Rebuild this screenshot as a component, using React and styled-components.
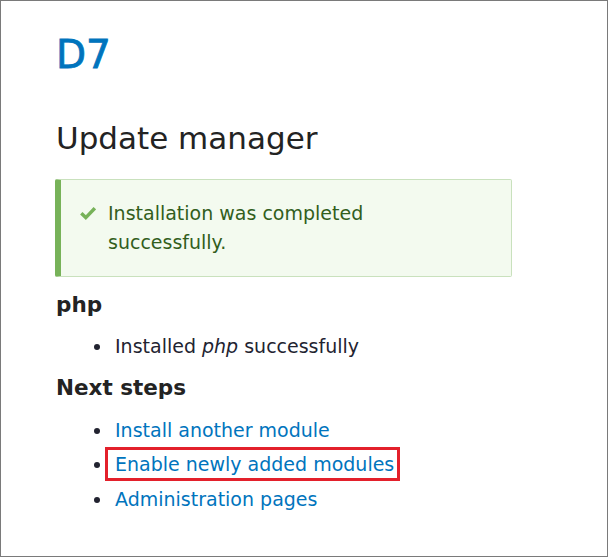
import * as React from "react";
import styled, { createGlobalStyle } from "styled-components";

const Global = createGlobalStyle`
html, body {
  margin: 0;
  padding: 0;
  background: #fff;
}
body {
  font-family: "DejaVu Sans", "Liberation Sans", sans-serif;
  color: #222330;
}`

const Frame = styled.div`
box-sizing: border-box;
width: 608px;
height: 557px;
border: 1px solid #7a7a7a;
padding: 31px 55px 0 55px;
overflow: hidden;`

const SiteName = styled.h1`
margin: 0;
font-size: 39px;
font-weight: normal;
-webkit-text-stroke: 0.8px #0074bd;
line-height: 46px;
color: #0074bd;`

const PageTitle = styled.h2`
margin: 40px 0 0 0;
font-size: 31px;
font-weight: normal;
line-height: 40px;
color: #232323;`

const Message = styled.div`
margin: 21px 0 0 -1px;
width: 457px;
box-sizing: border-box;
display: flex;
align-items: flex-start;
gap: 12px;
padding: 19px 40px 19px 19px;
background: #f3faef;
border: 1px solid #c9e1bd;
border-left: 6px solid #77b259;
border-radius: 2px;
color: #325e1c;
font-size: 19px;
line-height: 29px;`

const Check = styled.svg`
flex: none;
width: 16px;
height: 14px;
margin-top: 7px;`

const Section = styled.h3`
margin: ${({ $top }) => $top}px 0 0 0;
font-size: 21.5px;
font-weight: bold;
line-height: 26px;
color: #232323;`

const List = styled.ul`
margin: ${({ $top }) => $top}px 0 0 0;
padding: 0 0 0 59px;
list-style: none;`

const Item = styled.li`
position: relative;
font-size: 19px;
line-height: 34.5px;
color: #222330;
&::before {
  content: "";
  position: absolute;
  left: -21px;
  top: 15px;
  width: 6px;
  height: 6px;
  border-radius: 50%;
  background: #222330;
}`

const Link = styled.a`
color: #0074bd;
text-decoration: none;
display: inline-block;
line-height: 28px;
outline: ${({ $marked }) => ($marked ? "3px solid #e3202b" : "none")};
outline-offset: 0px;
padding: ${({ $marked }) => ($marked ? "0 3px 0 7px" : "0")};
margin-left: ${({ $marked }) => ($marked ? "-7px" : "0")};`

const links = [
  { label: "Install another module" },
  { label: "Enable newly added modules", marked: true },
  { label: "Administration pages" },
];

export default function App() {
  return (
    <>
      <Global />
      <Frame>
        <SiteName>D7</SiteName>
        <PageTitle>Update manager</PageTitle>
        <Message>
          <Check viewBox="0 0 16 14">
            <path d="M1.3 7.3 L5.8 11.6 L14.8 2.2" fill="none" stroke="#77b259" strokeWidth="3.4" />
          </Check>
          <div>Installation was completed successfully.</div>
        </Message>
        <Section $top={15}>php</Section>
        <List $top={11}>
          <Item>Installed <em>php</em> successfully</Item>
        </List>
        <Section $top={11}>Next steps</Section>
        <List $top={12}>
          {links.map((l) => (
            <Item key={l.label}>
              <Link href="#" $marked={l.marked}>{l.label}</Link>
            </Item>
          ))}
        </List>
      </Frame>
    </>
  );
}
